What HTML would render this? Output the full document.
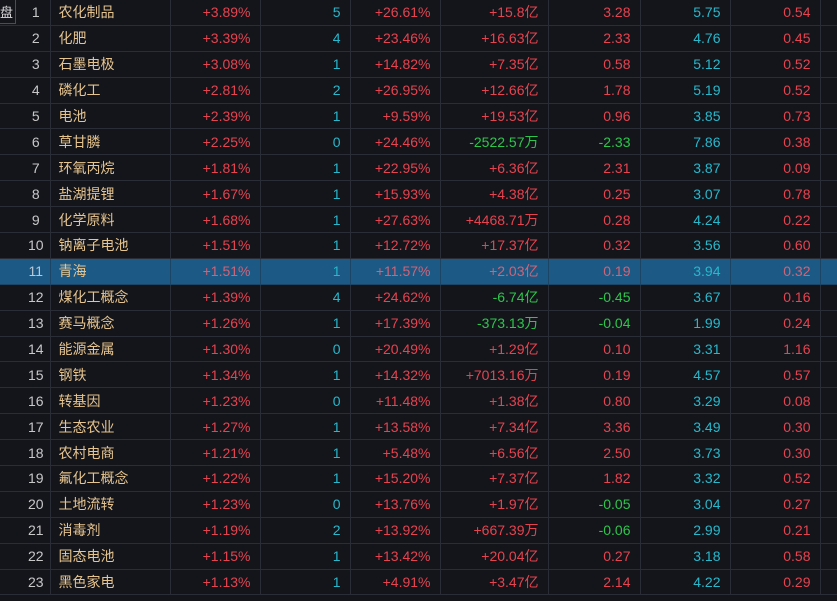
<!DOCTYPE html>
<html><head><meta charset="utf-8"><style>
html,body{margin:0;padding:0;background:#14151b;width:837px;height:601px;overflow:hidden}
body{font-family:"Liberation Sans","Noto Sans CJK SC",sans-serif;font-size:14px;position:relative}
.box{position:absolute;left:-2px;top:-1px;width:18px;height:25px;border:1px solid #4a4d55;color:#ddd;font-size:13px;line-height:25px;text-align:right;box-sizing:border-box;padding-right:2px;z-index:2}
table{border-collapse:collapse;table-layout:fixed;position:absolute;left:0;top:0;width:850px}
td{height:24.9px;padding:0 9px 0 0;border-right:1px solid #2a2d35;border-bottom:1px solid #2a2d35;text-align:right;white-space:nowrap;overflow:hidden;line-height:24px}
td:first-child{text-align:center;color:#c8c8c8;padding:0 0 0 22px}
td.n{text-align:left;color:#e6c48e;padding-left:8px}
.r{color:#e5434f}.c{color:#27b8cc}.g{color:#2ec54c}
tr.h td{background:#1c5985;border-color:#1b4566}
tr.h .r{color:#cf6478}tr.h td:first-child{color:#b8c8d8}
</style></head><body>
<div class="box">盘</div>
<table>
<colgroup><col style="width:50px"><col style="width:120px"><col style="width:90px"><col style="width:90px"><col style="width:90px"><col style="width:108px"><col style="width:92px"><col style="width:90px"><col style="width:90px"><col style="width:30px"></colgroup>
<tr><td>1</td><td class="n">农化制品</td><td class="r">+3.89%</td><td class="c">5</td><td class="r">+26.61%</td><td class="r">+15.8亿</td><td class="r">3.28</td><td class="c">5.75</td><td class="r">0.54</td><td></td></tr>
<tr><td>2</td><td class="n">化肥</td><td class="r">+3.39%</td><td class="c">4</td><td class="r">+23.46%</td><td class="r">+16.63亿</td><td class="r">2.33</td><td class="c">4.76</td><td class="r">0.45</td><td></td></tr>
<tr><td>3</td><td class="n">石墨电极</td><td class="r">+3.08%</td><td class="c">1</td><td class="r">+14.82%</td><td class="r">+7.35亿</td><td class="r">0.58</td><td class="c">5.12</td><td class="r">0.52</td><td></td></tr>
<tr><td>4</td><td class="n">磷化工</td><td class="r">+2.81%</td><td class="c">2</td><td class="r">+26.95%</td><td class="r">+12.66亿</td><td class="r">1.78</td><td class="c">5.19</td><td class="r">0.52</td><td></td></tr>
<tr><td>5</td><td class="n">电池</td><td class="r">+2.39%</td><td class="c">1</td><td class="r">+9.59%</td><td class="r">+19.53亿</td><td class="r">0.96</td><td class="c">3.85</td><td class="r">0.73</td><td></td></tr>
<tr><td>6</td><td class="n">草甘膦</td><td class="r">+2.25%</td><td class="c">0</td><td class="r">+24.46%</td><td class="g">-2522.57万</td><td class="g">-2.33</td><td class="c">7.86</td><td class="r">0.38</td><td></td></tr>
<tr><td>7</td><td class="n">环氧丙烷</td><td class="r">+1.81%</td><td class="c">1</td><td class="r">+22.95%</td><td class="r">+6.36亿</td><td class="r">2.31</td><td class="c">3.87</td><td class="r">0.09</td><td></td></tr>
<tr><td>8</td><td class="n">盐湖提锂</td><td class="r">+1.67%</td><td class="c">1</td><td class="r">+15.93%</td><td class="r">+4.38亿</td><td class="r">0.25</td><td class="c">3.07</td><td class="r">0.78</td><td></td></tr>
<tr><td>9</td><td class="n">化学原料</td><td class="r">+1.68%</td><td class="c">1</td><td class="r">+27.63%</td><td class="r">+4468.71万</td><td class="r">0.28</td><td class="c">4.24</td><td class="r">0.22</td><td></td></tr>
<tr><td>10</td><td class="n">钠离子电池</td><td class="r">+1.51%</td><td class="c">1</td><td class="r">+12.72%</td><td class="r">+17.37亿</td><td class="r">0.32</td><td class="c">3.56</td><td class="r">0.60</td><td></td></tr>
<tr class="h"><td>11</td><td class="n">青海</td><td class="r">+1.51%</td><td class="c">1</td><td class="r">+11.57%</td><td class="r">+2.03亿</td><td class="r">0.19</td><td class="c">3.94</td><td class="r">0.32</td><td></td></tr>
<tr><td>12</td><td class="n">煤化工概念</td><td class="r">+1.39%</td><td class="c">4</td><td class="r">+24.62%</td><td class="g">-6.74亿</td><td class="g">-0.45</td><td class="c">3.67</td><td class="r">0.16</td><td></td></tr>
<tr><td>13</td><td class="n">赛马概念</td><td class="r">+1.26%</td><td class="c">1</td><td class="r">+17.39%</td><td class="g">-373.13万</td><td class="g">-0.04</td><td class="c">1.99</td><td class="r">0.24</td><td></td></tr>
<tr><td>14</td><td class="n">能源金属</td><td class="r">+1.30%</td><td class="c">0</td><td class="r">+20.49%</td><td class="r">+1.29亿</td><td class="r">0.10</td><td class="c">3.31</td><td class="r">1.16</td><td></td></tr>
<tr><td>15</td><td class="n">钢铁</td><td class="r">+1.34%</td><td class="c">1</td><td class="r">+14.32%</td><td class="r">+7013.16万</td><td class="r">0.19</td><td class="c">4.57</td><td class="r">0.57</td><td></td></tr>
<tr><td>16</td><td class="n">转基因</td><td class="r">+1.23%</td><td class="c">0</td><td class="r">+11.48%</td><td class="r">+1.38亿</td><td class="r">0.80</td><td class="c">3.29</td><td class="r">0.08</td><td></td></tr>
<tr><td>17</td><td class="n">生态农业</td><td class="r">+1.27%</td><td class="c">1</td><td class="r">+13.58%</td><td class="r">+7.34亿</td><td class="r">3.36</td><td class="c">3.49</td><td class="r">0.30</td><td></td></tr>
<tr><td>18</td><td class="n">农村电商</td><td class="r">+1.21%</td><td class="c">1</td><td class="r">+5.48%</td><td class="r">+6.56亿</td><td class="r">2.50</td><td class="c">3.73</td><td class="r">0.30</td><td></td></tr>
<tr><td>19</td><td class="n">氟化工概念</td><td class="r">+1.22%</td><td class="c">1</td><td class="r">+15.20%</td><td class="r">+7.37亿</td><td class="r">1.82</td><td class="c">3.32</td><td class="r">0.52</td><td></td></tr>
<tr><td>20</td><td class="n">土地流转</td><td class="r">+1.23%</td><td class="c">0</td><td class="r">+13.76%</td><td class="r">+1.97亿</td><td class="g">-0.05</td><td class="c">3.04</td><td class="r">0.27</td><td></td></tr>
<tr><td>21</td><td class="n">消毒剂</td><td class="r">+1.19%</td><td class="c">2</td><td class="r">+13.92%</td><td class="r">+667.39万</td><td class="g">-0.06</td><td class="c">2.99</td><td class="r">0.21</td><td></td></tr>
<tr><td>22</td><td class="n">固态电池</td><td class="r">+1.15%</td><td class="c">1</td><td class="r">+13.42%</td><td class="r">+20.04亿</td><td class="r">0.27</td><td class="c">3.18</td><td class="r">0.58</td><td></td></tr>
<tr><td>23</td><td class="n">黑色家电</td><td class="r">+1.13%</td><td class="c">1</td><td class="r">+4.91%</td><td class="r">+3.47亿</td><td class="r">2.14</td><td class="c">4.22</td><td class="r">0.29</td><td></td></tr>
</table>
</body></html>
